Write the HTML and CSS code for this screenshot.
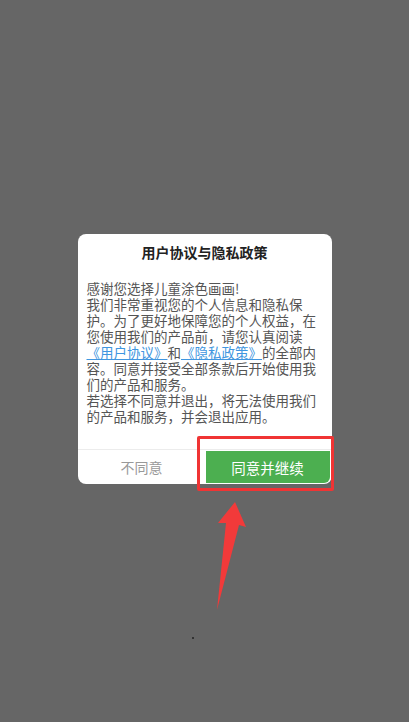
FILE: index.html
```html
<!DOCTYPE html>
<html>
<head>
  <meta charset="utf-8">
  <link rel="stylesheet" href="styles.css">
</head>
<body>
  <div class="screen">
    <div class="dialog">
      <div class="dialog-title">用户协议与隐私政策</div>
      <div class="dialog-content">
        <p>感谢您选择儿童涂色画画!</p>
        <p>我们非常重视您的个人信息和隐私保护。为了更好地保障您的个人权益，在您使用我们的产品前，请您认真阅读<a href="#">《用户协议》</a>和<a href="#">《隐私政策》</a>的全部内容。同意并接受全部条款后开始使用我们的产品和服务。</p>
        <p>若选择不同意并退出，将无法使用我们的产品和服务，并会退出应用。</p>
      </div>
      <div class="dialog-actions">
        <div class="btn-cancel">不同意</div>
        <div class="btn-ok">同意并继续</div>
      </div>
      <div class="highlight"></div>
    </div>
    <svg class="arrow" width="60" height="120" viewBox="0 0 60 120">
      <polygon points="35,2 46,27 39,25 17,110 26,23 18,23" fill="#f23a3a"/>
    </svg>
    <div class="dot"></div>
  </div>
</body>
</html>
```

FILE: styles.css
```css
html, body {
  margin: 0;
  padding: 0;
}

body {
  font-family: "Noto Sans CJK SC", "Noto Sans", sans-serif;
  background-color: #666666;
}

.screen {
  position: relative;
  width: 409px;
  height: 722px;
  box-sizing: border-box;
  padding-top: 234px;
  background-color: #666666;
  overflow: hidden;
}

.dialog {
  position: relative;
  width: 254px;
  margin: 0 auto;
  background-color: #fff;
  border-radius: 8px;
}

.dialog-title {
  padding-top: 8px;
  line-height: 20px;
  font-size: 14px;
  font-weight: bold;
  color: #222;
  text-align: center;
}

.dialog-content {
  padding: 18px 9px 25px 9px;
  font-size: 13.5px;
  line-height: 16px;
  color: #555;
}

.dialog-content p {
  margin: 0;
}

.dialog-content a {
  display: inline-block;
  height: 16px;
  line-height: 16px;
  color: #4096e0;
  text-decoration: underline;
}

.dialog-actions {
  display: flex;
  height: 34px;
  border-top: 1px solid #ececec;
}

.btn-cancel {
  flex: 0 0 128px;
  display: flex;
  align-items: center;
  justify-content: center;
  font-size: 14px;
  color: #999;
}

.btn-ok {
  flex: 1;
  display: flex;
  align-items: center;
  justify-content: center;
  margin: 1px 2px 1px 0;
  background-color: #4caf50;
  border-radius: 0 0 6px 0;
  font-size: 14.5px;
  color: #fff;
}

.highlight {
  position: absolute;
  left: 119px;
  top: 202px;
  width: 137px;
  height: 55px;
  box-sizing: border-box;
  border: 3px solid #f03434;
  border-radius: 2px;
}

.arrow {
  position: absolute;
  left: 200px;
  top: 500px;
}

.dot {
  position: absolute;
  left: 192px;
  top: 637px;
  width: 2px;
  height: 2px;
  background-color: #333;
}
```
